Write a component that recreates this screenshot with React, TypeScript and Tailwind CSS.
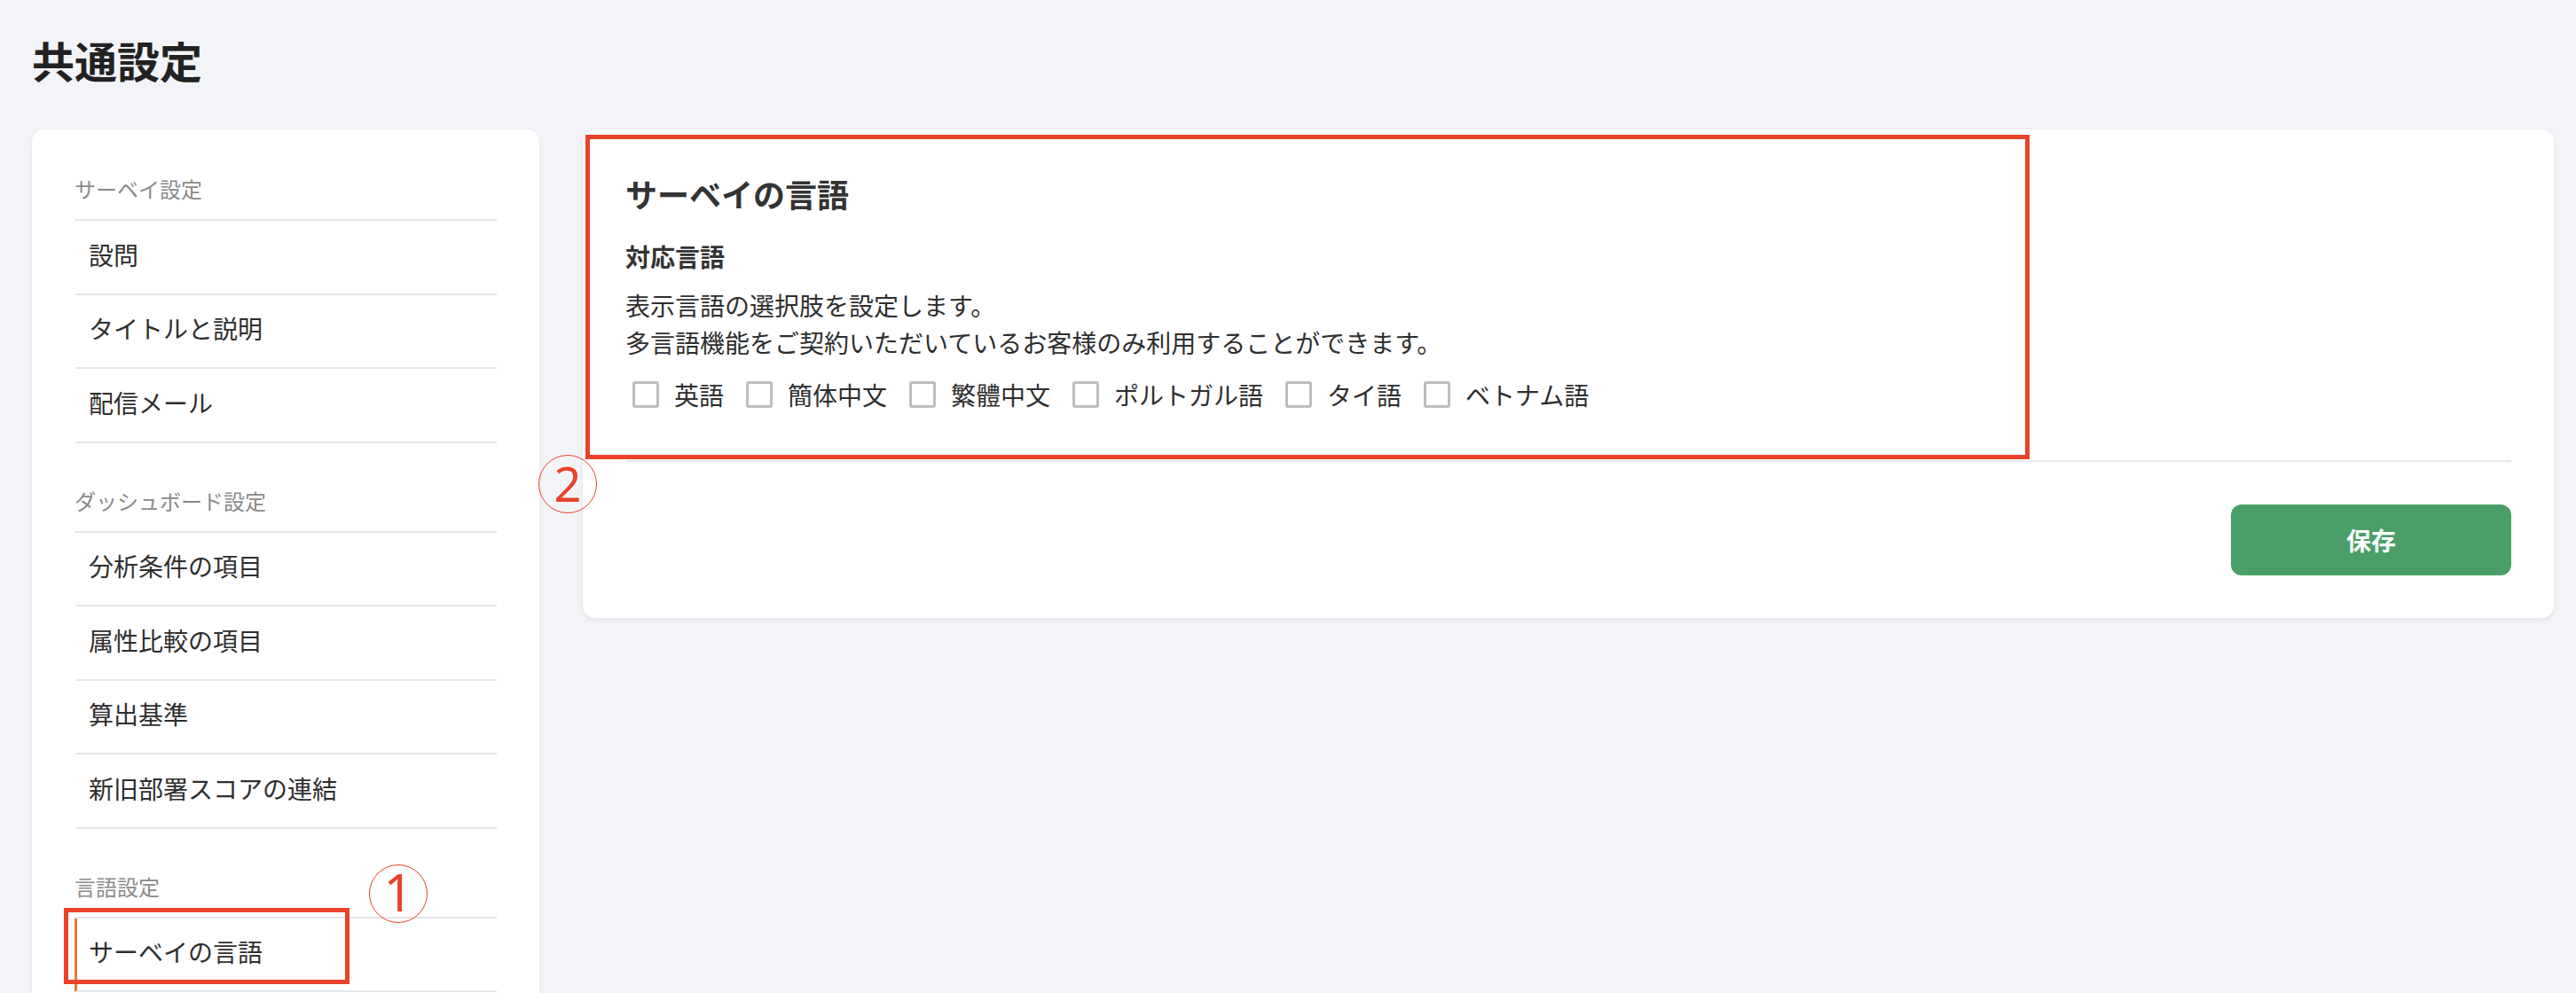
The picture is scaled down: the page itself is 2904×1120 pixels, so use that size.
import React from "react";

const sections: { title: string; items: string[] }[] = [
  { title: "サーベイ設定", items: ["設問", "タイトルと説明", "配信メール"] },
  {
    title: "ダッシュボード設定",
    items: ["分析条件の項目", "属性比較の項目", "算出基準", "新旧部署スコアの連結"],
  },
  { title: "言語設定", items: ["サーベイの言語"] },
];

const languages = ["英語", "簡体中文", "繁體中文", "ポルトガル語", "タイ語", "ベトナム語"];

function Sidebar() {
  return (
    <aside className="w-[572px] shrink-0 bg-white rounded-[14px] shadow-[0_2px_6px_rgba(0,0,0,0.07)] px-[48px] pt-[49px] pb-[48px]">
      {sections.map((s, si) => (
        <div key={s.title} className={si === 0 ? "" : "mt-[47px]"}>
          <div className="text-[24px] leading-[36px] text-[#8a8a8a] pb-[16px] border-b-2 border-[#e6e7eb]">
            {s.title}
          </div>
          <ul>
            {s.items.map((it) => {
              const selected = it === "サーベイの言語";
              return (
                <li
                  key={it}
                  className={
                    "relative border-b-2 border-[#e6e7eb] border-l-[3px] pl-[13px] pt-[16.5px] pb-[23px] text-[28px] leading-[42px] text-[#2e2e2e] " +
                    (selected ? "border-l-[#e07b39]" : "border-l-transparent")
                  }
                >
                  {it}
                  {selected && (
                    <>
                      <div className="absolute left-[-15px] top-[-12px] w-[322px] h-[86px] border-[5px] border-[#e8432a] pointer-events-none" />
                      <div className="absolute left-[329px] top-[-61px] w-[66px] h-[66px] rounded-full border-[1.5px] border-[#e8432a] flex items-center justify-center text-[#e8432a] text-[58px] leading-none font-['Noto_Sans',sans-serif]">
                        <span className="-mt-[3px]">1</span>
                      </div>
                    </>
                  )}
                </li>
              );
            })}
          </ul>
        </div>
      ))}
    </aside>
  );
}

function Checkbox({ label }: { label: string }) {
  return (
    <label className="flex items-center gap-[17px]">
      <span className="w-[30px] h-[30px] border-[3px] border-[#bdbdbd] rounded-[3px] bg-white" />
      <span className="text-[28px] leading-[42px] text-[#2e2e2e]">{label}</span>
    </label>
  );
}

function MainCard() {
  return (
    <section className="relative flex-1 bg-white rounded-[14px] shadow-[0_2px_6px_rgba(0,0,0,0.07)] px-[48px] pt-[48px] pb-[48px]">
      <div className="pb-[53px] border-b-2 border-[#e6e7eb]">
        <h2 className="text-[36px] leading-[48px] font-bold text-[#333333]">サーベイの言語</h2>
        <h3 className="mt-[26px] text-[28px] leading-[42px] font-bold text-[#333333]">対応言語</h3>
        <p className="mt-[13px] text-[28px] leading-[42px] text-[#2e2e2e]">
          表示言語の選択肢を設定します。
          <br />
          多言語機能をご契約いただいているお客様のみ利用することができます。
        </p>
        <div className="mt-[17px] pl-[8px] flex items-center gap-[25px]">
          {languages.map((l) => (
            <Checkbox key={l} label={l} />
          ))}
        </div>
      </div>
      <div className="flex justify-end pt-[48px]">
        <button className="w-[316px] h-[80px] rounded-[12px] bg-[#4a9e67] text-white text-[28px] font-bold">
          保存
        </button>
      </div>
      <div className="absolute left-[3px] top-[6px] w-[1628px] h-[366px] border-[5px] border-[#e8432a] pointer-events-none" />
      <div className="absolute left-[-50px] top-[367px] w-[66px] h-[66px] rounded-full border-[1.5px] border-[#e8432a] flex items-center justify-center text-[#e8432a] text-[54px] leading-none font-['Noto_Sans',sans-serif]">
        <span className="-mt-[2px]">2</span>
      </div>
    </section>
  );
}

export default function App() {
  return (
    <div className="h-[1120px] overflow-hidden bg-[#f3f4f8] pl-[36px] pr-[25px] pt-[31px] font-['Noto_Sans_CJK_JP','Noto_Sans',sans-serif]">
      <h1 className="text-[48px] leading-[72px] font-bold text-[#222222]">共通設定</h1>
      <div className="mt-[43px] flex items-start gap-[49px]">
        <Sidebar />
        <MainCard />
      </div>
    </div>
  );
}
